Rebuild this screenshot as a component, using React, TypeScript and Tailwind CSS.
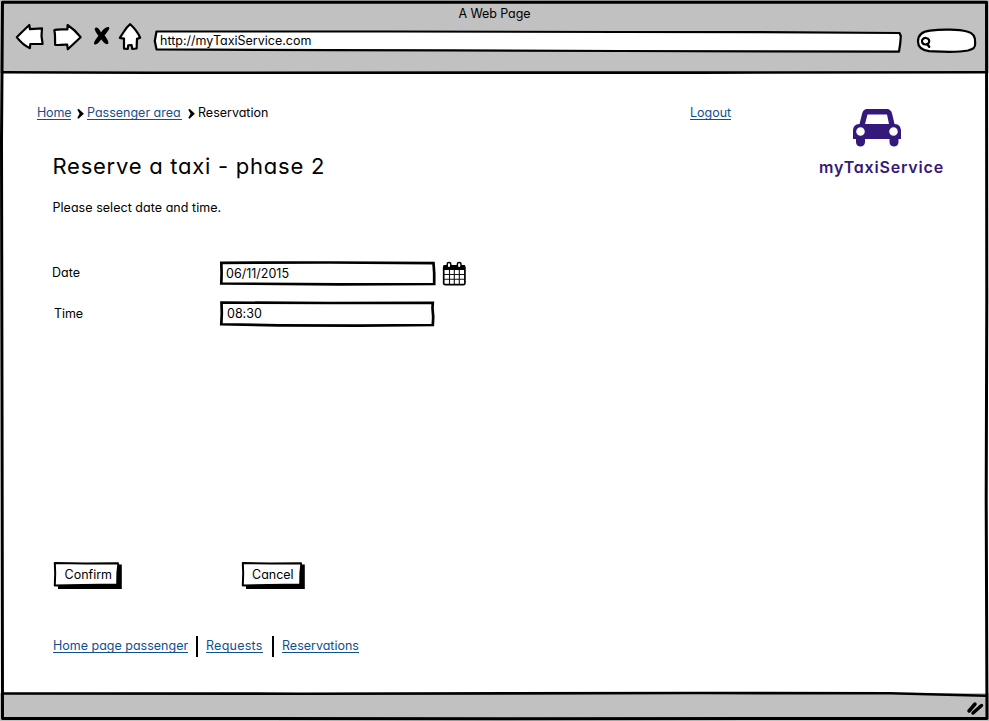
import type { ReactNode } from "react";

function Label({ children, className = "" }: { children: ReactNode; className?: string }) {
  return <span className={`block whitespace-nowrap text-[12.5px] leading-4 ${className}`}>{children}</span>;
}

function TextLink({ children, className = "" }: { children: ReactNode; className?: string }) {
  return (
    <a className={`block h-4 whitespace-nowrap border-b border-[#11508f] text-[12.5px] leading-[17px] text-[#11508f] ${className}`}>
      {children}
    </a>
  );
}

function Chevron({ className = "" }: { className?: string }) {
  return (
    <svg className={`h-3 w-[7px] shrink-0 ${className}`} viewBox="0 0 7 12">
      <path d="M.2 2.600 1.800 1.900 6.900 6.700 1.500 11.700 .3 11 2.600 6.800Z" fill="#000" />
    </svg>
  );
}

function Divider({ className = "" }: { className?: string }) {
  return <div className={`h-[21px] w-[2px] shrink-0 bg-black ${className}`} />;
}

function Field({ value, path, className = "" }: { value: string; path: string; className?: string }) {
  return (
    <div className={`relative h-[27px] w-[217px] shrink-0 ${className}`}>
      <svg className="absolute inset-0 h-full w-full" viewBox="0 0 217 27">
        <path d={path} fill="#fff" stroke="#000" strokeWidth="2.700" strokeLinejoin="miter" />
      </svg>
      <div className="relative">
        <Label>{value}</Label>
      </div>
    </div>
  );
}

function SketchButton({ label, width, className }: { label: string; width: number; className: string }) {
  const r = width - 4;
  return (
    <button className={`relative flex h-[28px] shrink-0 items-start text-left ${className}`}>
      <svg className="absolute inset-0 h-full w-full" viewBox={`0 0 ${width} 28`}>
        <path d={`M5 3.500H${width - 0.2}V27.900H5Z`} fill="#000" />
        <path d={`M1.800 2 ${r * 0.5} 2.400 ${r} 2.200 ${r + 0.2} 4 ${r - 0.6} 12 ${r - 0.8} 23.400 ${r * 0.45} 24 1.800 24.400 2.200 12Z`} fill="#fff" stroke="#000" strokeWidth="2" strokeLinejoin="round" />
      </svg>
      <span className="relative block">
        <Label>{label}</Label>
      </span>
    </button>
  );
}

function NavIcons() {
  return (
    <svg className="h-[32px] w-[130px] shrink-0" viewBox="14 20 130 32" fill="#fff" stroke="#000" strokeWidth="2.200" strokeLinejoin="round" strokeLinecap="round">
      <path d="M16.800 37.200C21 33 25 29 29.300 25L30 29.200 42 28.300 41.500 36 42.600 43.800 30.300 44 29.900 48.200C25 46 20 41.500 16.800 37.200Z" />
      <path d="M54.300 30.300C57 29 62 29.400 67.400 29.500L67.600 25C73 28.500 77 32.500 80.600 37.200L67.800 49.300 67.200 44.600C62 44.300 58 45.500 55.200 44.800 54.800 40 55.500 34 54.300 30.300Z" />
      <path d="M94.800 28.200C96.500 26.500 99 28 101 32.500 103 29.500 106.500 26.200 109 27.200 110.500 28.500 106.500 32.500 104.600 35.600 107 38.500 109 42 108.200 43.800 106 45.500 103 42 101.200 39.300 99.500 42 96.500 45.500 94.200 44.300 93.300 42 96.500 38.500 98.400 35.700 96.500 33 94.300 30.200 94.800 28.200Z" fill="#000" stroke="none" />
      <path d="M130.200 24.200C127.500 26.500 125.500 29 124 31.500L119.800 37.800 124 38.600 124 48.600 127.800 48.900 128.200 45.300 131.600 45 132.200 48.800 136.600 48.500 137 38.900 140.200 37.800C139 35 136 29.500 130.200 24.200Z" />
    </svg>
  );
}

function AddressBar() {
  return (
    <div className="relative ml-[9px] h-[24px] w-[750px] shrink-0 pl-[7px] pt-[4px]">
      <svg className="absolute inset-0 h-full w-full" viewBox="153 29 750 24">
        <path d="M156.500 31.500 390 31.500 620 32 760 32.200 899.500 33 900.800 36 900.300 43 899 51.600 620 51 450 50.400 330 50.200 156.500 49.300 154.800 41Z" fill="#fff" stroke="#000" strokeWidth="2.200" strokeLinejoin="round" />
      </svg>
      <Label className="relative">http://myTaxiService.com</Label>
    </div>
  );
}

function SearchBox() {
  return (
    <svg className="ml-[13px] h-[28px] w-[62px] shrink-0" viewBox="916 27 62 28" stroke="#000">
      <path d="M918 41.500C918 35 922 31.500 930 30.600 943 29 959 29.500 967 31.500 974 33 975.500 38 975.200 43 975.500 48 973 49 968 50.500 956 53 942 51.800 929 51.200 921 50 918 46 918 41.500Z" fill="#fff" strokeWidth="2.200" />
      <path d="M922 41.700C921.500 39 924 37.800 926 38 929 38.300 929.800 41 928.800 42.600 928 45 922.500 45.500 922 41.700Z" fill="none" strokeWidth="2.200" />
      <path d="M927.300 44.300 929.200 46.800" strokeWidth="2.400" strokeLinecap="round" />
    </svg>
  );
}

function CalendarIcon() {
  return (
    <svg className="ml-[6px] h-[25px] w-[24px] shrink-0" viewBox="442 261 24 25">
      <rect x="443.700" y="266" width="21.200" height="18.700" rx="1.500" fill="#fff" stroke="#000" strokeWidth="1.700" />
      <path d="M443.500 265H465V270H443.500Z" fill="#000" />
      <path d="M449.500 270V284M454.300 270V284M459.300 270V284M444 274.500H465M444 279.300H465" stroke="#111" strokeWidth="1.100" />
      <rect x="447.200" y="262.400" width="3.600" height="5.300" rx="1.700" fill="#fff" stroke="#000" strokeWidth="1.500" />
      <rect x="457.400" y="262.400" width="3.600" height="5.300" rx="1.700" fill="#fff" stroke="#000" strokeWidth="1.500" />
    </svg>
  );
}

function CarIcon() {
  return (
    <svg className="h-[38px] w-[48px]" viewBox="853 109 48 38">
      <path fillRule="evenodd" fill="#34197a" d="M868 109H886C890 109 891.500 111 892.200 114L894.500 124C899 124 901 127 901 131V139H898.500V142C898.500 148 889.500 148 889.500 142V139H865V142C865 148 856 148 856 142V139H853V131C853 127 855 124 859.500 124L862 114C862.800 111 864 109 868 109ZM867.500 114.500 865 124H889L887 114.500ZM860.500 127.200A4.300 4.300 0 1 0 860.500 135.800 4.300 4.300 0 1 0 860.500 127.200ZM893.500 127.200A4.300 4.300 0 1 0 893.500 135.800 4.300 4.300 0 1 0 893.500 127.200Z" />
    </svg>
  );
}

export default function App() {
  return (
    <div className="relative flex h-[721px] w-[989px] flex-col overflow-hidden bg-white font-['Inter',sans-serif] font-normal text-black [font-feature-settings:'cv11'_1,'calt'_0]">
      <header className="h-[73px] shrink-0 bg-[#c1c1c1] pt-[6px]">
        <div className="flex h-[14px] justify-center">
          <Label className="tracking-[-0.1px]">A Web Page</Label>
        </div>
        <div className="flex items-start pl-[14px]">
          <NavIcons />
          <div className="flex pt-[9px]"><AddressBar /></div>
          <div className="flex pt-[7px]"><SearchBox /></div>
        </div>
      </header>

      <main className="flex h-[620px] shrink-0">
        <div className="w-[800px] shrink-0">
          <div className="flex h-[47px] items-end pl-[37px]">
            <TextLink className="w-[34px] tracking-[-0.2px]">Home</TextLink>
            <Chevron className="mb-[1px] ml-[6px]" />
            <TextLink className="ml-[3px] w-[95px]">Passenger area</TextLink>
            <Chevron className="mb-[1px] ml-[6px]" />
            <Label className="-mb-px ml-[3px] w-[492px]">Reservation</Label>
            <TextLink className="w-[41px]">Logout</TextLink>
          </div>
          <h1 className="mt-[32px] pl-[52.5px] text-[22px] leading-[28px] tracking-[0.75px]">Reserve a taxi - phase 2</h1>
          <div className="mt-[20px] pl-[52.5px]"><Label className="tracking-[0.04px]">Please select date and time.</Label></div>
          <div className="mt-[44px] flex h-[27px] items-center pl-[52px]">
            <Label className="mb-[2px] w-[167px]">Date</Label>
            <Field className="pl-[7px] pt-[6px]" value="06/11/2015" path="M2.300 2.800 110 2.500 214.500 3.200 215.200 13 215.200 24 120 24.400 2.300 23.500 2.600 13Z" />
            <CalendarIcon />
          </div>
          <div className="mt-[13px] flex h-[27px] items-center pl-[54px]">
            <Label className="w-[165px] tracking-[-0.1px]">Time</Label>
            <Field className="pl-[8px] pt-[6px]" value="08:30" path="M2.500 2.600 110 3 213.800 2.800 213.500 8 214.200 17 213.800 25 140 25.600 60 25.400 2.300 24.300 2.800 13Z" />
          </div>
          <div className="mt-[234px] flex pl-[53px]">
            <SketchButton label="Confirm" width={69} className="w-[69px] pl-[11.5px] pt-[6px]" />
            <SketchButton label="Cancel" width={64} className="ml-[119px] w-[64px] pl-[11px] pt-[6px]" />
          </div>
          <div className="mt-[47px] flex items-start pl-[53px]">
            <TextLink className="mt-[1px] w-[135px]">Home page passenger</TextLink>
            <Divider className="ml-[8px]" />
            <TextLink className="ml-[8px] mt-[1px] w-[57px] tracking-[0.25px]">Requests</TextLink>
            <Divider className="ml-[9px]" />
            <TextLink className="ml-[8px] mt-[1px] w-[77px]">Reservations</TextLink>
          </div>
        </div>
        <aside className="flex w-[154px] shrink-0 flex-col items-center pt-[36px] text-[#34197a]">
          <CarIcon />
          <strong className="ml-[9px] mt-[9px] whitespace-nowrap text-[16px] font-semibold leading-[22px] tracking-[0.8px]">myTaxiService</strong>
        </aside>
      </main>

      <footer className="h-[28px] shrink-0 bg-[#c1c1c1]" />

      <svg className="pointer-events-none absolute inset-0 h-full w-full" viewBox="0 0 989 721" fill="none" stroke="#000" strokeWidth="3" strokeLinejoin="round">
        <path d="M2.500 2.200H986.500L986.800 300 986.200 500 987 718.500 500 718.700 2.500 718.500 2 400 1.500 140Z" />
        <path d="M3 72.200 150 72.700 700 72.600 986 72.300" strokeWidth="2.600" />
        <path d="M3 693.500 300 693.700 700 693 890 693.300 986 695.800" strokeWidth="2.600" />
        <path d="M969 711 975 704M973 713 981.500 705.500" strokeWidth="3.500" strokeLinecap="round" />
      </svg>
    </div>
  );
}
